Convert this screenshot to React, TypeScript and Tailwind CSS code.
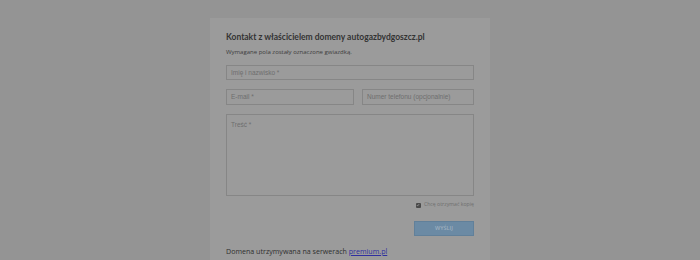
export default function App() {
  return (
    <div className="w-full bg-[#949494] overflow-hidden" style={{ height: 260 }}>
      <div className="mx-auto mt-[18px] w-[280px] h-[260px] bg-[#9b9b9b] px-4 pt-[13px] font-['Open_Sans',sans-serif] flex flex-col">
        <h1 className="text-[8.5px] leading-[12px] font-bold text-[#333] font-['Lato',sans-serif]">
          Kontakt z właścicielem domeny autogazbydgoszcz.pl
        </h1>
        <p className="mt-[4px] text-[6px] leading-[10px] text-[#3c3c3c]">
          Wymagane pola zostały oznaczone gwiazdką.
        </p>
        <div className="mt-[8px] h-[15px] border border-[#868686] flex items-center px-[4px] text-[6.5px] text-[#6e6e6e] font-['Liberation_Sans',sans-serif]">
          Imię i nazwisko *
        </div>
        <div className="mt-[9px] flex gap-2">
          <div className="w-[128px] h-[16px] border border-[#868686] flex items-center px-[4px] text-[6.5px] text-[#6e6e6e] font-['Liberation_Sans',sans-serif]">
            E-mail *
          </div>
          <div className="flex-1 h-[16px] border border-[#868686] flex items-center px-[4px] text-[6.5px] text-[#6e6e6e] font-['Liberation_Sans',sans-serif]">
            Numer telefonu (opcjonalnie)
          </div>
        </div>
        <div className="mt-[9px] h-[82px] border border-[#868686] px-[4px] pt-[5px] text-[6.5px] text-[#6e6e6e] font-['Liberation_Sans',sans-serif]">
          Treść *
        </div>
        <div className="mt-[4px] h-[10px] flex items-center justify-end gap-[3px] text-[5.2px] text-[#6e6e6e]">
          <span className="w-[5px] h-[5px] bg-[#4a4a4a] rounded-[1px] flex items-center justify-center">
            <svg viewBox="0 0 10 10" className="w-[4px] h-[4px]">
              <path d="M2 5 L4 7.5 L8 2.5" stroke="#a5a5a5" strokeWidth="1.6" fill="none" />
            </svg>
          </span>
          <span>Chcę otrzymać kopię</span>
        </div>
        <div className="mt-[11px] self-end w-[60px] h-[15px] bg-[#6b8aa4] border border-[#61809a] flex items-center justify-center text-[5.5px] text-[#9fb0bf] font-semibold">
          WYŚLIJ
        </div>
        <p className="mt-[10px] text-[7.1px] leading-[10px] text-[#2f2f2f]">
          Domena utrzymywana na serwerach{" "}
          <a className="text-[#2f2fa0] underline">premium.pl</a>
        </p>
      </div>
    </div>
  );
}
